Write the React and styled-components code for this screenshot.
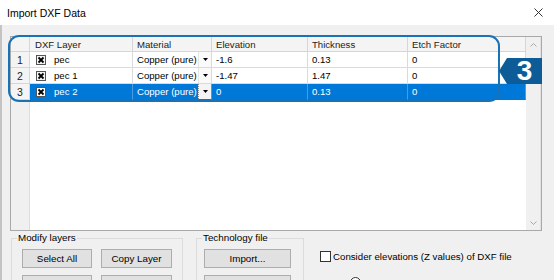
import React from 'react';
import styled, { createGlobalStyle } from 'styled-components';

const GlobalStyle = createGlobalStyle`
  html, body {
    margin: 0;
    padding: 0;
    height: 280px;
    overflow: hidden;
    background: #f0f0f0;
  }
  body {
    font-family: "Liberation Sans", Arial, sans-serif;
    font-size: 9.6px;
    color: #000;
  }
`;

const columns = ['DXF Layer', 'Material', 'Elevation', 'Thickness', 'Etch Factor'];

const rows = [
  { id: 1, layer: 'pec', material: 'Copper (pure)', elevation: '-1.6', thickness: '0.13', etch: '0' },
  { id: 2, layer: 'pec 1', material: 'Copper (pure)', elevation: '-1.47', thickness: '1.47', etch: '0' },
  { id: 3, layer: 'pec 2', material: 'Copper (pure)', elevation: '0', thickness: '0.13', etch: '0', selected: true },
];

const CheckMark = ({ light }) => (
  <svg width="10" height="10" viewBox="0 0 10 10">
    <rect x="0.5" y="0.5" width="9" height="9" fill={light ? '#fff' : '#f4f4f4'} stroke="#555" />
    <path d="M2.5 2.5 L7.5 7.5 M7.5 2.5 L2.5 7.5" stroke="#000" strokeWidth="1.8" />
  </svg>
);

const App = () => {
  return (
    <>
      <GlobalStyle />
      <Dialog>
        <TitleBar>
          <Title>Import DXF Data</Title>
          <Close>
            <svg width="9" height="9" viewBox="0 0 9 9">
              <path d="M0.5 0.5 L8.5 8.5 M8.5 0.5 L0.5 8.5" stroke="#333" strokeWidth="1" />
            </svg>
          </Close>
        </TitleBar>
        <Body>
          <GridWrap>
            <GridFrame>
              <Table>
                <HeaderCell />
                {columns.map((c, i) => (
                  <HeaderCell key={c} $first={i === 0}>{c}</HeaderCell>
                ))}
                {rows.map((r) => (
                  <React.Fragment key={r.id}>
                    <RowHead>{r.id}</RowHead>
                    <Cell $selected={r.selected}>
                      <LayerBox>
                        <CheckMark light={r.selected} />
                        <span>{r.layer}</span>
                      </LayerBox>
                    </Cell>
                    <Cell $selected={r.selected} $combo>
                      <ComboText>{r.material}</ComboText>
                      <ComboButton $selected={r.selected}>
                        <svg width="5" height="3" viewBox="0 0 5 3">
                          <path d="M0 0 L5 0 L2.5 3 Z" fill="#000" />
                        </svg>
                      </ComboButton>
                    </Cell>
                    <Cell $selected={r.selected}>{r.elevation}</Cell>
                    <Cell $selected={r.selected}>{r.thickness}</Cell>
                    <Cell $selected={r.selected}>{r.etch}</Cell>
                  </React.Fragment>
                ))}
                <RowHeadFill />
                <BlankFill />
              </Table>
              <ScrollBar>
                <svg width="7" height="4" viewBox="0 0 7 4">
                  <path d="M0.5 3.5 L3.5 0.5 L6.5 3.5" stroke="#a8a8a8" fill="none" />
                </svg>
                <svg width="7" height="4" viewBox="0 0 7 4">
                  <path d="M0.5 0.5 L3.5 3.5 L6.5 0.5" stroke="#a8a8a8" fill="none" />
                </svg>
              </ScrollBar>
            </GridFrame>
            <Annotation />
            <Badge>
              <svg width="43" height="26" viewBox="0 0 43 26">
                <polygon points="0,13 8,0 43,0 43,26 8,26" fill="#0d5c97" />
              </svg>
              <BadgeNum>3</BadgeNum>
            </Badge>
          </GridWrap>

          <Bottom>
            <Group $width={172}>
              <Legend $shift={-5}>Modify layers</Legend>
              <ButtonGrid>
                <Button $width={70}>Select All</Button>
                <Button $width={71}>Copy Layer</Button>
                <Button $width={70} aria-label="Delete Layer" />
                <Button $width={71} aria-label="Add Layer" />
              </ButtonGrid>
            </Group>
            <Group $width={108} $pad={7}>
              <Legend $shift={-2}>Technology file</Legend>
              <ButtonCol>
                <Button $width={87}>Import...</Button>
                <Button $width={87} aria-label="Export" />
              </ButtonCol>
            </Group>
            <Options>
              <OptionRow>
                <Box />
                <span>Consider elevations (Z values) of DXF file</span>
              </OptionRow>
              <RadioRow>
                <Radio />
              </RadioRow>
            </Options>
          </Bottom>
        </Body>
      </Dialog>
    </>
  );
};

export default App;

const Dialog = styled.div`
  width: 554px;
  height: 280px;
  display: flex;
  flex-direction: column;
  overflow: hidden;
  background: #f0f0f0;
`;

const TitleBar = styled.div`
  height: 25px;
  flex: none;
  background: #fff;
  display: flex;
  align-items: center;
  justify-content: space-between;
  padding-left: 7px;
`;

const Title = styled.div`
  font-size: 10.5px;
  color: #000;
  padding-top: 1px;
`;

const Close = styled.div`
  width: 28px;
  height: 25px;
  display: flex;
  align-items: center;
  justify-content: flex-start;
  padding-left: 8px;
  box-sizing: border-box;
`;

const Body = styled.div`
  flex: 1;
  border-left: 2px solid #c4c4c4;
  padding: 11px 0 0 8px;
`;

const GridWrap = styled.div`
  position: relative;
  width: 532px;
  height: 195px;
`;

const GridFrame = styled.div`
  display: flex;
  width: 100%;
  height: 100%;
  box-sizing: border-box;
  border: 1px solid #a9a9a9;
  background: #fff;
`;

const Table = styled.div`
  display: grid;
  grid-template-columns: 19px 103px 79px 96px 100px 118px;
  grid-template-rows: 15px 16px 16px 16px 1fr;
  width: 515px;
  flex: none;
`;

const HeaderCell = styled.div`
  background: #f4f4f4;
  border-right: 1px solid #d6d6d6;
  border-bottom: 1px solid #d6d6d6;
  box-sizing: border-box;
  padding-left: ${(p) => (p.$first ? '5px' : '4px')};
  display: flex;
  align-items: center;
  color: #222;
  white-space: nowrap;
  overflow: hidden;
`;

const RowHead = styled.div`
  background: #f4f4f4;
  border-right: 1px solid #d6d6d6;
  border-bottom: 1px solid #d6d6d6;
  box-sizing: border-box;
  display: flex;
  align-items: center;
  justify-content: center;
  font-size: 10.5px;
  color: #222;
`;

const Cell = styled.div`
  background: ${(p) => (p.$selected ? '#0078d7' : '#fff')};
  color: ${(p) => (p.$selected ? '#fff' : '#000')};
  border-right: 1px solid ${(p) => (p.$selected ? '#4a9be0' : '#dadada')};
  border-bottom: 1px solid ${(p) => (p.$selected ? '#0078d7' : '#dadada')};
  box-sizing: border-box;
  display: flex;
  align-items: center;
  padding-left: 4px;
  padding-right: ${(p) => (p.$combo ? '0' : '4px')};
  white-space: nowrap;
  overflow: hidden;
`;

const LayerBox = styled.div`
  display: flex;
  align-items: center;
  gap: 8px;
  padding-left: 2px;
  svg {
    flex: none;
  }
`;

const ComboText = styled.span`
  flex: 1;
  overflow: hidden;
`;

const ComboButton = styled.div`
  width: 12px;
  height: 15px;
  flex: none;
  display: flex;
  align-items: center;
  justify-content: center;
  background: ${(p) => (p.$selected ? '#f4f4f4' : '#fafafa')};
  border-left: 1px ${(p) => (p.$selected ? 'dotted #888' : 'solid #e4e4e4')};
`;

const RowHeadFill = styled.div`
  background: #f0f0f0;
  border-right: 1px solid #dcdcdc;
`;

const BlankFill = styled.div`
  grid-column: 2 / -1;
  background: #fff;
`;

const ScrollBar = styled.div`
  flex: 1;
  background: #f0f0f0;
  display: flex;
  flex-direction: column;
  align-items: center;
  justify-content: space-between;
  padding: 6px 0 5px;
  border-right: 1px solid #e2e2e2;
`;

const Annotation = styled.div`
  position: absolute;
  left: -2px;
  top: -1px;
  width: 492px;
  height: 67px;
  box-sizing: border-box;
  border: 2px solid #1a72b6;
  border-radius: 11px;
  pointer-events: none;
`;

const Badge = styled.div`
  position: absolute;
  left: 489px;
  top: 22px;
  width: 43px;
  height: 26px;
  svg {
    display: block;
  }
`;

const BadgeNum = styled.div`
  position: absolute;
  left: 8px;
  right: 0;
  top: 0;
  bottom: 0;
  display: flex;
  align-items: center;
  justify-content: center;
  color: #fff;
  font-weight: bold;
  font-size: 28px;
  line-height: 1;
`;

const Bottom = styled.div`
  display: flex;
  align-items: flex-start;
  gap: 13px;
  padding-left: 1px;
  margin-top: 1px;
`;

const Group = styled.fieldset`
  margin: 0;
  width: ${(p) => p.$width}px;
  box-sizing: border-box;
  border: 1px solid #dcdcdc;
  padding: 5px ${(p) => p.$pad || 10}px 0;
  min-width: 0;
`;

const Legend = styled.legend`
  font-size: 9.8px;
  line-height: 12px;
  padding: 0 1px;
  margin-left: ${(p) => p.$shift}px;
  color: #000;
`;

const ButtonGrid = styled.div`
  display: grid;
  grid-template-columns: 70px 71px;
  column-gap: 9px;
  row-gap: 7px;
`;

const ButtonCol = styled.div`
  display: flex;
  flex-direction: column;
  gap: 7px;
`;

const Button = styled.button`
  width: ${(p) => p.$width}px;
  height: 19px;
  margin: 0;
  padding: 0;
  background: #e1e1e1;
  border: 1px solid #adadad;
  font-family: "Liberation Sans", Arial, sans-serif;
  font-size: 9.8px;
  color: #000;
`;

const Options = styled.div`
  padding-top: 19px;
  padding-left: 3px;
  display: flex;
  flex-direction: column;
  gap: 15px;
`;

const OptionRow = styled.div`
  display: flex;
  align-items: center;
  gap: 2px;
  height: 11px;
  font-size: 9.7px;
`;

const Box = styled.div`
  width: 11px;
  height: 11px;
  box-sizing: border-box;
  border: 1px solid #333;
  background: #fff;
`;

const RadioRow = styled.div`
  padding-left: 30px;
`;

const Radio = styled.div`
  width: 11px;
  height: 11px;
  box-sizing: border-box;
  border: 1px solid #333;
  border-radius: 50%;
  background: #fff;
`;
